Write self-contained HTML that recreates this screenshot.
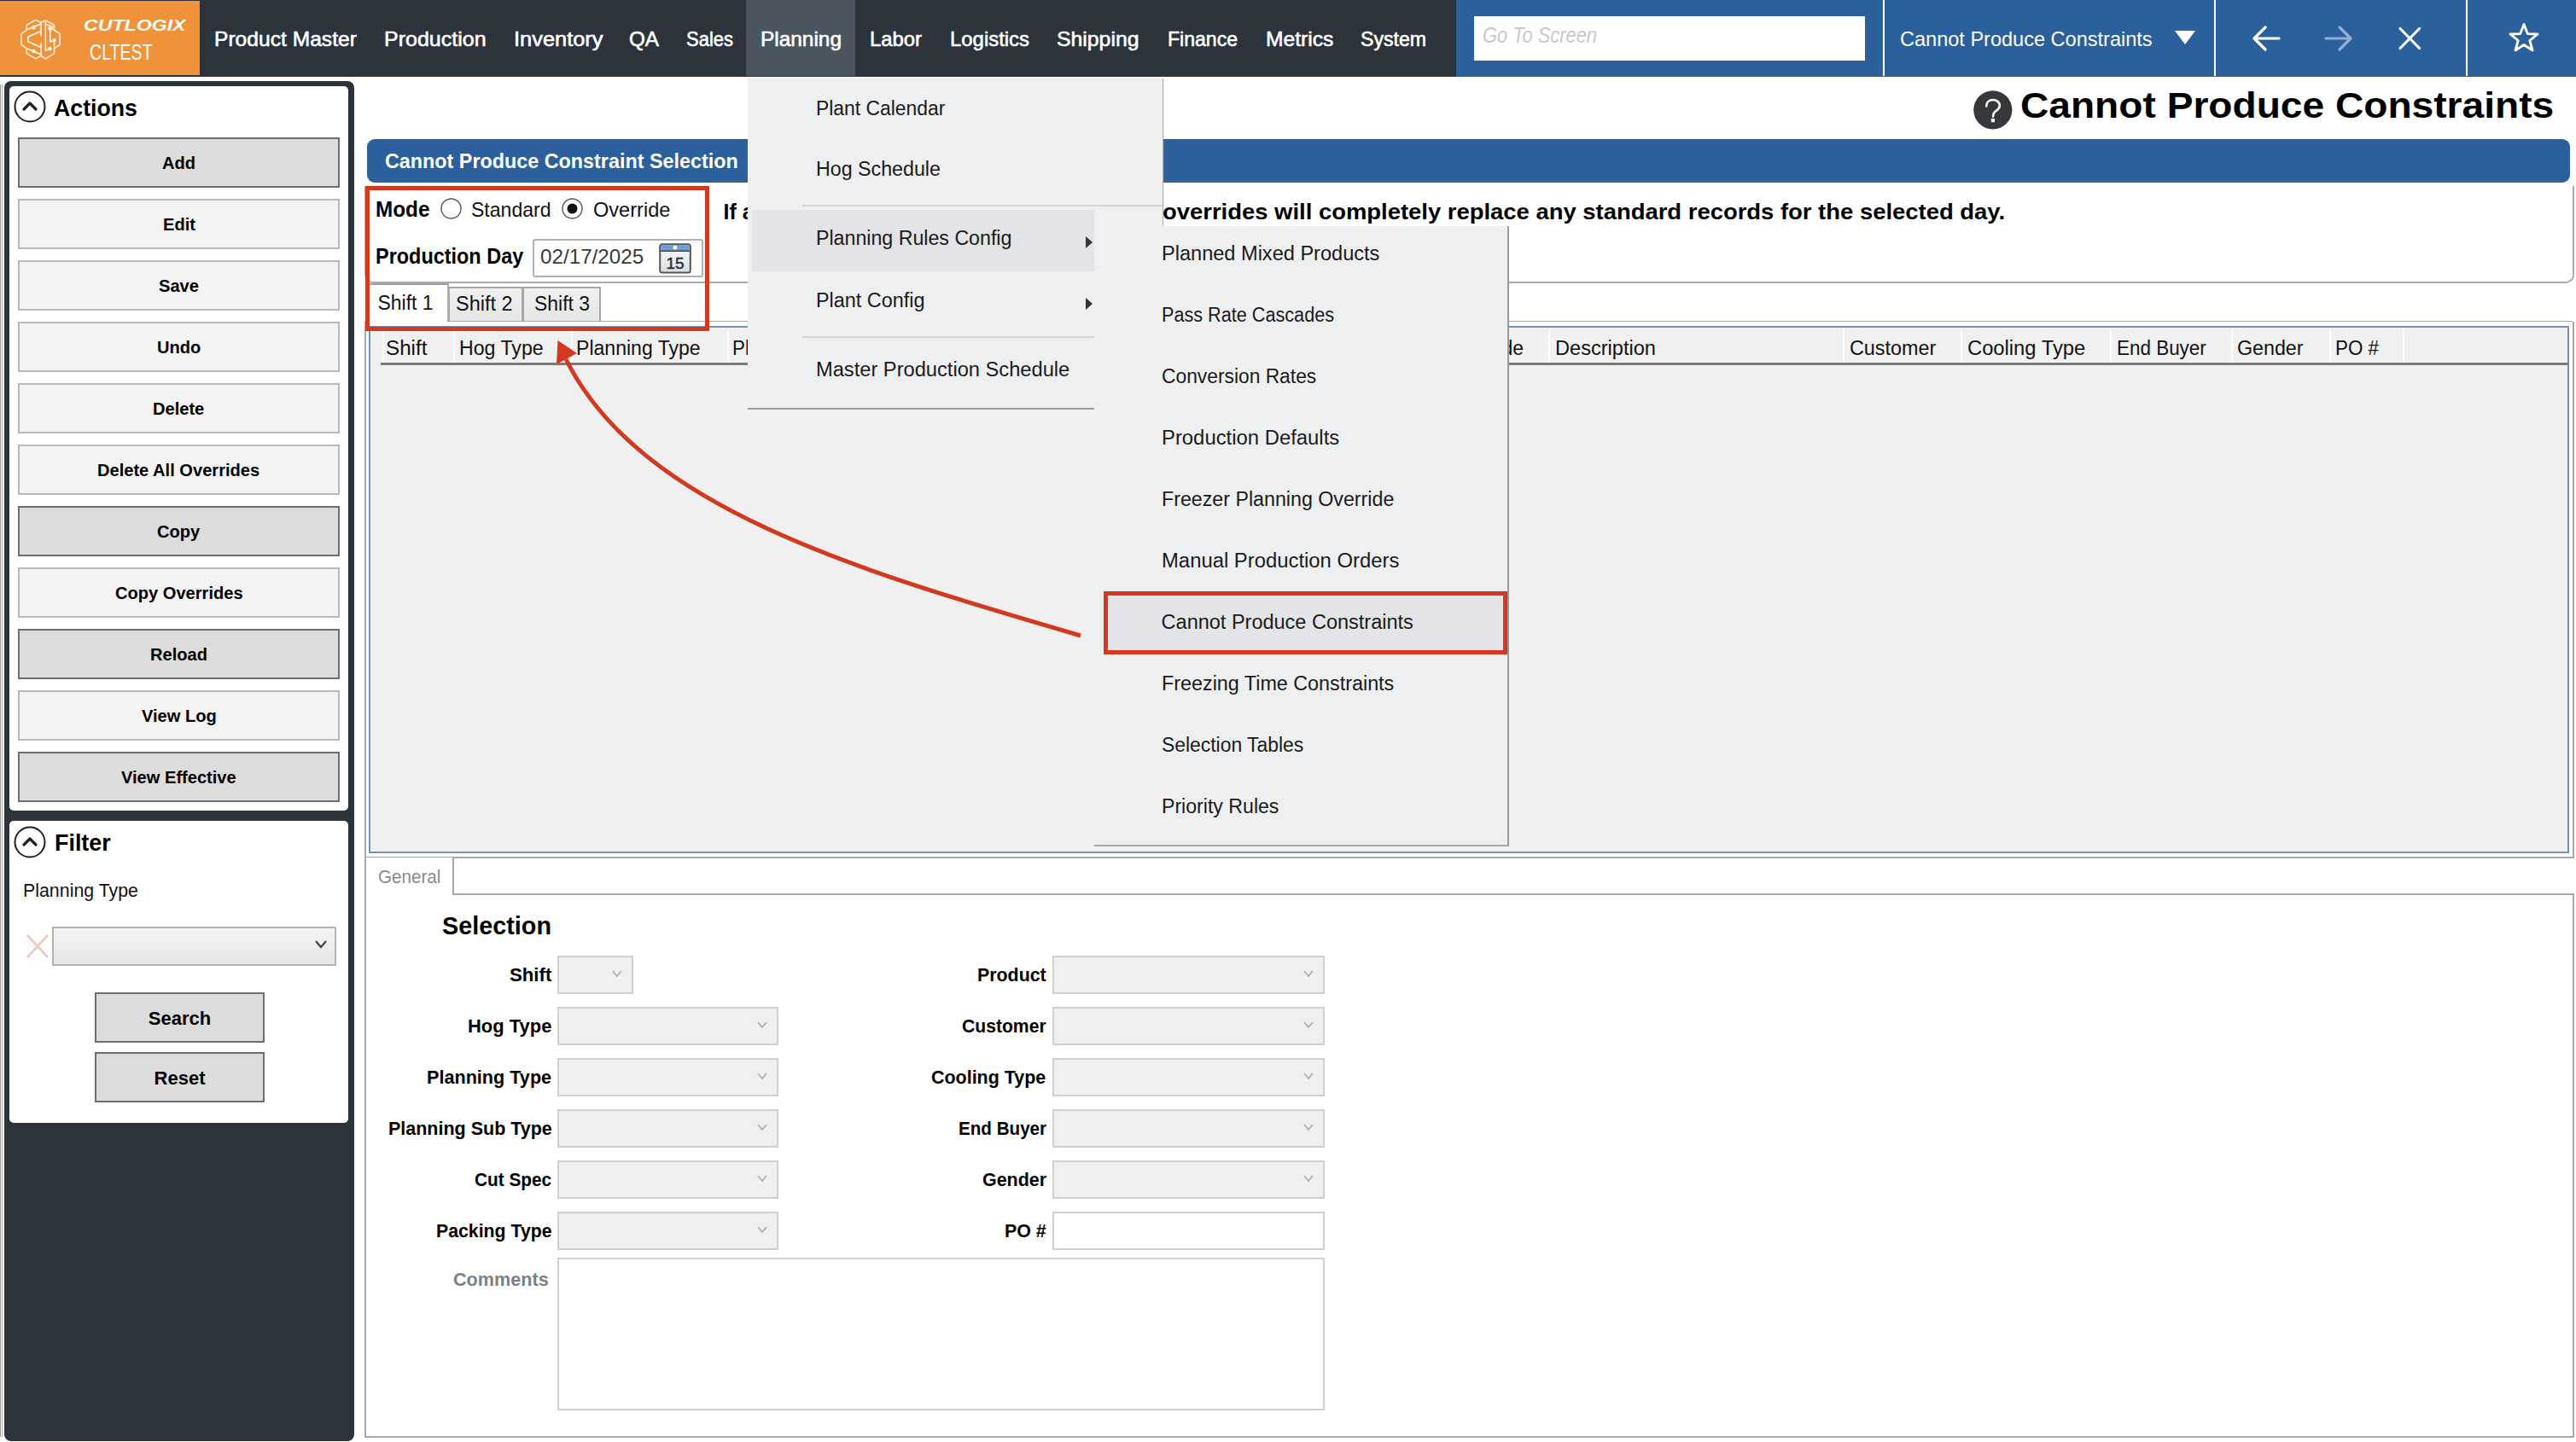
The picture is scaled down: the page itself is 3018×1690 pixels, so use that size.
<!DOCTYPE html>
<html><head><meta charset="utf-8"><style>
html,body{margin:0;padding:0;width:3018px;height:1690px;overflow:hidden;font-family:"Liberation Sans",sans-serif;}
</style></head><body>
<div style="position:absolute;left:0px;top:0px;width:3018px;height:1690px;background:#fff"></div>
<div style="position:absolute;left:0px;top:0px;width:3018px;height:90px;background:#2d333a"></div>
<div style="position:absolute;left:0px;top:1px;width:234px;height:87px;background:#f0923a"></div>
<div style="position:absolute;left:874px;top:0px;width:128px;height:89px;background:#4a555f"></div>
<div style="position:absolute;left:1706px;top:0px;width:1312px;height:89.5px;background:#2c609c"></div>
<div style="position:absolute;left:1727px;top:19px;width:458px;height:52px;background:#fff"></div>
<div style="position:absolute;left:2206px;top:0px;width:2px;height:89px;background:#fff"></div>
<div style="position:absolute;left:2594px;top:0px;width:2px;height:89px;background:#fff"></div>
<div style="position:absolute;left:2889px;top:0px;width:2px;height:89px;background:#fff"></div>
<svg style="position:absolute;left:20px;top:18px" width="56" height="56" viewBox="0 0 56 56" fill="none" stroke="#fff7ee" stroke-width="1.5" stroke-linejoin="round" stroke-linecap="round">
<path d="M28 8.5 L21.7 5.4 L11.3 11.3 L11.3 17.1 L5 21.7 L5 34.2 L11.3 38.8 L11.3 44.7 L21.7 50.9 L28 47.4 L33.4 50.9 L43.5 44.7 L43.5 38.8 L50.1 34.6 L50.1 21.7 L43.5 17.1 L43.5 11.3 L33.4 5.8 Z"/>
<path d="M28 8.5 L28 23.5 M28 33 L28 47.4"/>
<path d="M11.5 16.8 L27.2 10.2"/>
<path d="M27.2 19 L12.8 25.2 L12.8 30.7 L27.2 37.3"/>
<path d="M11.5 38.8 L27.2 45.5"/>
<path d="M33.4 5.8 L33.4 41.6 L38.6 39"/>
<path d="M35 10.8 L41.5 13.5 L41.5 17"/>
<path d="M38.8 15.5 L38.8 31 L43.5 29.3"/>
<path d="M43.5 29.3 L43.5 38.8"/>
<circle cx="19.4" cy="14.2" r="1.6" fill="#fff7ee"/><circle cx="19.4" cy="42" r="1.6" fill="#fff7ee"/>
<circle cx="38.6" cy="15.5" r="1.6" fill="#fff7ee"/><circle cx="43.5" cy="29.3" r="1.6" fill="#fff7ee"/><circle cx="38.4" cy="39.2" r="1.6" fill="#fff7ee"/>
</svg>
<div style="position:absolute;left:98.30px;top:20.21px;font-size:19px;line-height:19px;white-space:nowrap;color:#fff;font-weight:bold;font-style:italic;transform:scaleX(1.2176);transform-origin:0 0;">CUTLOGIX</div>
<div style="position:absolute;left:104.80px;top:48.71px;font-size:25.5px;line-height:25.5px;white-space:nowrap;color:#fff;transform:scaleX(0.7676);transform-origin:0 0;">CLTEST</div>
<div style="position:absolute;left:250.90px;top:33.63px;font-size:24.3px;line-height:24.3px;white-space:nowrap;color:#fff;-webkit-text-stroke:0.6px #fff;transform:scaleX(1.0130);transform-origin:0 0;">Product Master</div>
<div style="position:absolute;left:450.00px;top:33.63px;font-size:24.3px;line-height:24.3px;white-space:nowrap;color:#fff;-webkit-text-stroke:0.6px #fff;transform:scaleX(1.0297);transform-origin:0 0;">Production</div>
<div style="position:absolute;left:601.50px;top:33.63px;font-size:24.3px;line-height:24.3px;white-space:nowrap;color:#fff;-webkit-text-stroke:0.6px #fff;transform:scaleX(1.0457);transform-origin:0 0;">Inventory</div>
<div style="position:absolute;left:737.00px;top:33.63px;font-size:24.3px;line-height:24.3px;white-space:nowrap;color:#fff;-webkit-text-stroke:0.6px #fff;transform:scaleX(0.9968);transform-origin:0 0;">QA</div>
<div style="position:absolute;left:804.00px;top:33.63px;font-size:24.3px;line-height:24.3px;white-space:nowrap;color:#fff;-webkit-text-stroke:0.6px #fff;transform:scaleX(0.9044);transform-origin:0 0;">Sales</div>
<div style="position:absolute;left:891.00px;top:33.63px;font-size:24.3px;line-height:24.3px;white-space:nowrap;color:#fff;-webkit-text-stroke:0.6px #fff;transform:scaleX(1.0044);transform-origin:0 0;">Planning</div>
<div style="position:absolute;left:1019.00px;top:33.63px;font-size:24.3px;line-height:24.3px;white-space:nowrap;color:#fff;-webkit-text-stroke:0.6px #fff;transform:scaleX(0.9815);transform-origin:0 0;">Labor</div>
<div style="position:absolute;left:1113.00px;top:33.63px;font-size:24.3px;line-height:24.3px;white-space:nowrap;color:#fff;-webkit-text-stroke:0.6px #fff;transform:scaleX(0.9838);transform-origin:0 0;">Logistics</div>
<div style="position:absolute;left:1238.00px;top:33.63px;font-size:24.3px;line-height:24.3px;white-space:nowrap;color:#fff;-webkit-text-stroke:0.6px #fff;transform:scaleX(1.0202);transform-origin:0 0;">Shipping</div>
<div style="position:absolute;left:1368.00px;top:33.63px;font-size:24.3px;line-height:24.3px;white-space:nowrap;color:#fff;-webkit-text-stroke:0.6px #fff;transform:scaleX(0.9486);transform-origin:0 0;">Finance</div>
<div style="position:absolute;left:1482.60px;top:33.63px;font-size:24.3px;line-height:24.3px;white-space:nowrap;color:#fff;-webkit-text-stroke:0.6px #fff;transform:scaleX(1.0140);transform-origin:0 0;">Metrics</div>
<div style="position:absolute;left:1594.00px;top:33.63px;font-size:24.3px;line-height:24.3px;white-space:nowrap;color:#fff;-webkit-text-stroke:0.6px #fff;transform:scaleX(0.9501);transform-origin:0 0;">System</div>
<div style="position:absolute;left:1737.00px;top:28.83px;font-size:25px;line-height:25px;white-space:nowrap;color:#c9c9c9;font-style:italic;transform:scaleX(0.8740);transform-origin:0 0;">Go To Screen</div>
<div style="position:absolute;left:2226.00px;top:33.68px;font-size:24px;line-height:24px;white-space:nowrap;color:#fff;transform:scaleX(0.9804);transform-origin:0 0;">Cannot Produce Constraints</div>
<svg style="position:absolute;left:2547px;top:35px" width="26" height="18"><path d="M1 1 L25 1 L13 17 Z" fill="#fff"/></svg>
<svg style="position:absolute;left:2636px;top:26px" width="40" height="38" fill="none" stroke="#fff" stroke-width="3.2" stroke-linecap="round" stroke-linejoin="round"><path d="M34 19 L6 19 M18 6 L5 19 L18 32"/></svg>
<svg style="position:absolute;left:2721px;top:26px" width="40" height="38" fill="none" stroke="#8fb0d2" stroke-width="3.2" stroke-linecap="round" stroke-linejoin="round"><path d="M4 19 L32 19 M20 6 L33 19 L20 32"/></svg>
<svg style="position:absolute;left:2806px;top:28px" width="34" height="34" fill="none" stroke="#fff" stroke-width="3.2" stroke-linecap="round"><path d="M6 5.5 L28.5 28.5 M28.5 5.5 L6 28.5"/></svg>
<svg style="position:absolute;left:2936px;top:24px" width="42" height="40" fill="none" stroke="#fff" stroke-width="2.8" stroke-linejoin="round"><path d="M21 4.5 L25.3 15.6 L37 16 L27.8 23.5 L31 35 L21 28.5 L11 35 L14.2 23.5 L5 16 L16.7 15.6 Z"/></svg>
<div style="position:absolute;left:0px;top:99px;width:1px;height:1585px;background:#9a9a9a"></div>
<div style="position:absolute;left:2px;top:99px;width:1px;height:1585px;background:#b0b0b0"></div>
<div style="position:absolute;left:5px;top:95px;width:410px;height:1594px;background:#2d333a;border-radius:8px"></div>
<div style="position:absolute;left:10.5px;top:100.5px;width:397.5px;height:849.5px;background:#fff;border-radius:5px"></div>
<div style="position:absolute;left:10.5px;top:962px;width:397.5px;height:354px;background:#fff;border-radius:5px"></div>
<svg style="position:absolute;left:15px;top:105px" width="40" height="40" fill="none" stroke="#222" stroke-width="2"><circle cx="20" cy="20" r="17.5"/><path d="M13 23 L20 16 L27 23" stroke-width="3.2" stroke-linecap="round" stroke-linejoin="round"/></svg>
<div style="position:absolute;left:63.00px;top:112.79px;font-size:28px;line-height:28px;white-space:nowrap;color:#000;font-weight:bold;transform:scaleX(0.9543);transform-origin:0 0;">Actions</div>
<div style="position:absolute;left:21px;top:161px;width:377px;height:59px;background:#dcdcdc;border:2px solid #6e6e6e;box-sizing:border-box"></div>
<div style="position:absolute;left:189.97px;top:182.49px;font-size:19.5px;line-height:19.5px;white-space:nowrap;color:#000;font-weight:bold;transform:scaleX(1.0300);transform-origin:0 0;">Add</div>
<div style="position:absolute;left:21px;top:233px;width:377px;height:59px;background:#f3f3f3;border:2px solid #b8b8b8;box-sizing:border-box"></div>
<div style="position:absolute;left:190.54px;top:254.49px;font-size:19.5px;line-height:19.5px;white-space:nowrap;color:#000;font-weight:bold;transform:scaleX(1.0300);transform-origin:0 0;">Edit</div>
<div style="position:absolute;left:21px;top:305px;width:377px;height:59px;background:#f3f3f3;border:2px solid #b8b8b8;box-sizing:border-box"></div>
<div style="position:absolute;left:186.05px;top:326.49px;font-size:19.5px;line-height:19.5px;white-space:nowrap;color:#000;font-weight:bold;transform:scaleX(1.0300);transform-origin:0 0;">Save</div>
<div style="position:absolute;left:21px;top:377px;width:377px;height:59px;background:#f3f3f3;border:2px solid #b8b8b8;box-sizing:border-box"></div>
<div style="position:absolute;left:183.84px;top:398.49px;font-size:19.5px;line-height:19.5px;white-space:nowrap;color:#000;font-weight:bold;transform:scaleX(1.0300);transform-origin:0 0;">Undo</div>
<div style="position:absolute;left:21px;top:449px;width:377px;height:59px;background:#f3f3f3;border:2px solid #b8b8b8;box-sizing:border-box"></div>
<div style="position:absolute;left:179.35px;top:470.49px;font-size:19.5px;line-height:19.5px;white-space:nowrap;color:#000;font-weight:bold;transform:scaleX(1.0300);transform-origin:0 0;">Delete</div>
<div style="position:absolute;left:21px;top:521px;width:377px;height:59px;background:#f3f3f3;border:2px solid #b8b8b8;box-sizing:border-box"></div>
<div style="position:absolute;left:114.42px;top:542.49px;font-size:19.5px;line-height:19.5px;white-space:nowrap;color:#000;font-weight:bold;transform:scaleX(1.0300);transform-origin:0 0;">Delete All Overrides</div>
<div style="position:absolute;left:21px;top:593px;width:377px;height:59px;background:#dcdcdc;border:2px solid #6e6e6e;box-sizing:border-box"></div>
<div style="position:absolute;left:184.39px;top:614.49px;font-size:19.5px;line-height:19.5px;white-space:nowrap;color:#000;font-weight:bold;transform:scaleX(1.0300);transform-origin:0 0;">Copy</div>
<div style="position:absolute;left:21px;top:665px;width:377px;height:59px;background:#f3f3f3;border:2px solid #b8b8b8;box-sizing:border-box"></div>
<div style="position:absolute;left:134.71px;top:686.49px;font-size:19.5px;line-height:19.5px;white-space:nowrap;color:#000;font-weight:bold;transform:scaleX(1.0300);transform-origin:0 0;">Copy Overrides</div>
<div style="position:absolute;left:21px;top:737px;width:377px;height:59px;background:#dcdcdc;border:2px solid #6e6e6e;box-sizing:border-box"></div>
<div style="position:absolute;left:176.01px;top:758.49px;font-size:19.5px;line-height:19.5px;white-space:nowrap;color:#000;font-weight:bold;transform:scaleX(1.0300);transform-origin:0 0;">Reload</div>
<div style="position:absolute;left:21px;top:809px;width:377px;height:59px;background:#f3f3f3;border:2px solid #b8b8b8;box-sizing:border-box"></div>
<div style="position:absolute;left:165.59px;top:830.49px;font-size:19.5px;line-height:19.5px;white-space:nowrap;color:#000;font-weight:bold;transform:scaleX(1.0300);transform-origin:0 0;">View Log</div>
<div style="position:absolute;left:21px;top:881px;width:377px;height:59px;background:#dcdcdc;border:2px solid #6e6e6e;box-sizing:border-box"></div>
<div style="position:absolute;left:142.14px;top:902.49px;font-size:19.5px;line-height:19.5px;white-space:nowrap;color:#000;font-weight:bold;transform:scaleX(1.0300);transform-origin:0 0;">View Effective</div>
<svg style="position:absolute;left:15px;top:967px" width="40" height="40" fill="none" stroke="#222" stroke-width="2"><circle cx="20" cy="20" r="17.5"/><path d="M13 23 L20 16 L27 23" stroke-width="3.2" stroke-linecap="round" stroke-linejoin="round"/></svg>
<div style="position:absolute;left:64.00px;top:974.29px;font-size:28px;line-height:28px;white-space:nowrap;color:#000;font-weight:bold;transform:scaleX(0.9597);transform-origin:0 0;">Filter</div>
<div style="position:absolute;left:27.00px;top:1033.37px;font-size:22px;line-height:22px;white-space:nowrap;color:#111;transform:scaleX(0.9709);transform-origin:0 0;">Planning Type</div>
<svg style="position:absolute;left:29px;top:1093px" width="30" height="32" fill="none" stroke="#f4c6c0" stroke-width="2.6"><path d="M3 3 L27 29 M27 3 L3 29"/></svg>
<div style="position:absolute;left:61px;top:1086px;width:333px;height:46px;background:linear-gradient(#f4f4f4,#e6e6e6);border:2px solid #b4b4b4;box-sizing:border-box"></div>
<svg style="position:absolute;left:368px;top:1100px" width="16" height="14" fill="none" stroke="#444" stroke-width="2.2"><path d="M2 3 L8 10 L14 3"/></svg>
<div style="position:absolute;left:111px;top:1162.5px;width:199px;height:59px;background:#dcdcdc;border:2px solid #6e6e6e;box-sizing:border-box"></div>
<div style="position:absolute;left:173.81px;top:1183.37px;font-size:22px;line-height:22px;white-space:nowrap;color:#000;font-weight:bold;">Search</div>
<div style="position:absolute;left:111px;top:1232.5px;width:199px;height:59px;background:#dcdcdc;border:2px solid #6e6e6e;box-sizing:border-box"></div>
<div style="position:absolute;left:180.55px;top:1253.37px;font-size:22px;line-height:22px;white-space:nowrap;color:#000;font-weight:bold;">Reset</div>
<svg style="position:absolute;left:2312px;top:105.5px" width="46" height="46"><circle cx="22.8" cy="22.8" r="22.6" fill="#35383d"/><path d="M15.2 18.5 C15.2 13.5 18.8 11 23 11 C27.5 11 30.8 14 30.8 17.8 C30.8 21.8 27.3 23.3 25 25.3 C23.6 26.6 23 27.8 23 30.6" fill="none" stroke="#fff" stroke-width="2.6" stroke-linecap="round"/><rect x="20.8" y="33" width="4.2" height="4.2" fill="#fff"/></svg>
<div style="position:absolute;left:2366.70px;top:103.04px;font-size:42px;line-height:42px;white-space:nowrap;color:#000;font-weight:bold;transform:scaleX(1.0980);transform-origin:0 0;">Cannot Produce Constraints</div>
<div style="position:absolute;left:426.5px;top:210px;width:2589px;height:122.3px;border:2px solid #ababab;border-top:none;border-radius:0 0 10px 10px;box-sizing:border-box;background:#fff"></div>
<div style="position:absolute;left:420px;top:200px;width:2598px;height:18px;background:#fff"></div>
<div style="position:absolute;left:430.3px;top:162.5px;width:2581.2px;height:51.8px;background:#2c609c;border-radius:9px"></div>
<div style="position:absolute;left:450.70px;top:177.38px;font-size:24px;line-height:24px;white-space:nowrap;color:#fff;font-weight:bold;transform:scaleX(0.9725);transform-origin:0 0;">Cannot Produce Constraint Selection</div>
<div style="position:absolute;left:439.60px;top:233.33px;font-size:25px;line-height:25px;white-space:nowrap;color:#000;font-weight:bold;transform:scaleX(0.9716);transform-origin:0 0;">Mode</div>
<svg style="position:absolute;left:515px;top:231px" width="27" height="27"><circle cx="13.5" cy="13.5" r="11.5" fill="#fff" stroke="#555" stroke-width="1.4"/></svg>
<div style="position:absolute;left:552.00px;top:234.18px;font-size:24px;line-height:24px;white-space:nowrap;color:#111;transform:scaleX(0.9602);transform-origin:0 0;">Standard</div>
<svg style="position:absolute;left:657px;top:231px" width="27" height="27"><circle cx="13.5" cy="13.5" r="11.5" fill="#fff" stroke="#555" stroke-width="1.4"/><circle cx="13.5" cy="13.5" r="6" fill="#111"/></svg>
<div style="position:absolute;left:694.80px;top:234.18px;font-size:24px;line-height:24px;white-space:nowrap;color:#111;transform:scaleX(0.9822);transform-origin:0 0;">Override</div>
<div style="position:absolute;left:847.60px;top:236.13px;font-size:25px;line-height:25px;white-space:nowrap;color:#000;font-weight:bold;">If any</div>
<div style="position:absolute;left:1361.70px;top:236.03px;font-size:25px;line-height:25px;white-space:nowrap;color:#000;font-weight:bold;transform:scaleX(1.0969);transform-origin:0 0;">overrides will completely replace any standard records for the selected day.</div>
<div style="position:absolute;left:439.60px;top:288.33px;font-size:25px;line-height:25px;white-space:nowrap;color:#000;font-weight:bold;transform:scaleX(0.9375);transform-origin:0 0;">Production Day</div>
<div style="position:absolute;left:624px;top:280px;width:200px;height:45px;border:2.5px solid #a9b3bd;border-radius:3px;box-sizing:border-box;background:#fff"></div>
<div style="position:absolute;left:633.30px;top:288.68px;font-size:24px;line-height:24px;white-space:nowrap;color:#3a3a3a;transform:scaleX(1.0090);transform-origin:0 0;">02/17/2025</div>
<svg style="position:absolute;left:772px;top:284.5px" width="38" height="36">
<defs><linearGradient id="cg" x1="0" y1="0" x2="0" y2="1"><stop offset="0" stop-color="#fbfcfd"/><stop offset="1" stop-color="#d9dde2"/></linearGradient></defs>
<rect x="1.2" y="1.2" width="35.6" height="33.4" rx="2.5" fill="url(#cg)" stroke="#555" stroke-width="2"/>
<rect x="2.2" y="2.2" width="33.6" height="6.8" fill="#6f9fd6"/>
<line x1="2.2" y1="9.3" x2="35.8" y2="9.3" stroke="#444" stroke-width="1.6"/>
<circle cx="19" cy="5.2" r="2.4" fill="#fff"/>
<text x="19" y="30" font-family="Liberation Sans" font-size="19" fill="#2a2a2a" text-anchor="middle" stroke="#2a2a2a" stroke-width="0.4">15</text>
</svg>
<div style="position:absolute;left:430px;top:332px;width:96px;height:46px;background:#fff;border-left:2px solid #c8c8c8;border-top:2px solid #a0a0a0;border-right:2px solid #b0b0b0;box-sizing:border-box"></div>
<div style="position:absolute;left:525px;top:336px;width:88px;height:41px;background:linear-gradient(#f0f0f0,#e6e6e6);border:2px solid #a8a8a8;border-bottom:none;box-sizing:border-box"></div>
<div style="position:absolute;left:612px;top:336px;width:92px;height:41px;background:linear-gradient(#f0f0f0,#e6e6e6);border:2px solid #a8a8a8;border-bottom:none;box-sizing:border-box"></div>
<div style="position:absolute;left:525px;top:376px;width:2489px;height:2px;background:#a8a8a8"></div>
<div style="position:absolute;left:442.40px;top:344.03px;font-size:23px;line-height:23px;white-space:nowrap;color:#111;">Shift 1</div>
<div style="position:absolute;left:533.70px;top:344.53px;font-size:23px;line-height:23px;white-space:nowrap;color:#111;transform:scaleX(1.0229);transform-origin:0 0;">Shift 2</div>
<div style="position:absolute;left:625.50px;top:344.53px;font-size:23px;line-height:23px;white-space:nowrap;color:#111;transform:scaleX(0.9969);transform-origin:0 0;">Shift 3</div>
<div style="position:absolute;left:427px;top:377px;width:2589px;height:629px;border:2px solid #a8a8a8;border-top:none;box-sizing:border-box;background:#fff"></div>
<div style="position:absolute;left:432px;top:382px;width:2578px;height:618px;border:2px solid #7191b6;box-sizing:border-box;background:#f0f0f0"></div>
<div style="position:absolute;left:446px;top:425px;width:2562px;height:3px;background:#7a7a7a"></div>
<div style="position:absolute;left:448px;top:386px;width:2px;height:39px;background:#fcfcfc"></div>
<div style="position:absolute;left:531px;top:386px;width:2px;height:39px;background:#fcfcfc"></div>
<div style="position:absolute;left:669px;top:386px;width:2px;height:39px;background:#fcfcfc"></div>
<div style="position:absolute;left:852px;top:386px;width:2px;height:39px;background:#fcfcfc"></div>
<div style="position:absolute;left:1814px;top:386px;width:2px;height:39px;background:#fcfcfc"></div>
<div style="position:absolute;left:2159px;top:386px;width:2px;height:39px;background:#fcfcfc"></div>
<div style="position:absolute;left:2297px;top:386px;width:2px;height:39px;background:#fcfcfc"></div>
<div style="position:absolute;left:2472px;top:386px;width:2px;height:39px;background:#fcfcfc"></div>
<div style="position:absolute;left:2614px;top:386px;width:2px;height:39px;background:#fcfcfc"></div>
<div style="position:absolute;left:2729px;top:386px;width:2px;height:39px;background:#fcfcfc"></div>
<div style="position:absolute;left:2815px;top:386px;width:2px;height:39px;background:#fcfcfc"></div>
<div style="position:absolute;left:452.20px;top:396.53px;font-size:23px;line-height:23px;white-space:nowrap;color:#111;transform:scaleX(1.0522);transform-origin:0 0;">Shift</div>
<div style="position:absolute;left:537.80px;top:396.53px;font-size:23px;line-height:23px;white-space:nowrap;color:#111;transform:scaleX(1.0068);transform-origin:0 0;">Hog Type</div>
<div style="position:absolute;left:674.90px;top:396.53px;font-size:23px;line-height:23px;white-space:nowrap;color:#111;transform:scaleX(1.0023);transform-origin:0 0;">Planning Type</div>
<div style="position:absolute;left:857.90px;top:396.53px;font-size:23px;line-height:23px;white-space:nowrap;color:#111;transform:scaleX(0.97);transform-origin:0 0;">Plant</div>
<div style="position:absolute;left:1730.03px;top:396.53px;font-size:23px;line-height:23px;white-space:nowrap;color:#111;">Code</div>
<div style="position:absolute;left:1821.60px;top:396.53px;font-size:23px;line-height:23px;white-space:nowrap;color:#111;transform:scaleX(1.0256);transform-origin:0 0;">Description</div>
<div style="position:absolute;left:2167.40px;top:396.53px;font-size:23px;line-height:23px;white-space:nowrap;color:#111;transform:scaleX(1.0150);transform-origin:0 0;">Customer</div>
<div style="position:absolute;left:2304.50px;top:396.53px;font-size:23px;line-height:23px;white-space:nowrap;color:#111;transform:scaleX(1.0324);transform-origin:0 0;">Cooling Type</div>
<div style="position:absolute;left:2480.40px;top:396.53px;font-size:23px;line-height:23px;white-space:nowrap;color:#111;transform:scaleX(0.9757);transform-origin:0 0;">End Buyer</div>
<div style="position:absolute;left:2621.20px;top:396.53px;font-size:23px;line-height:23px;white-space:nowrap;color:#111;transform:scaleX(1.0104);transform-origin:0 0;">Gender</div>
<div style="position:absolute;left:2735.90px;top:396.53px;font-size:23px;line-height:23px;white-space:nowrap;color:#111;transform:scaleX(0.9706);transform-origin:0 0;">PO #</div>
<div style="position:absolute;left:427px;top:1048px;width:2589px;height:637px;border:2px solid #a8a8a8;border-top:none;box-sizing:border-box;background:#fff"></div>
<div style="position:absolute;left:531px;top:1047px;width:2485px;height:2px;background:#a8a8a8"></div>
<div style="position:absolute;left:427px;top:1005px;width:105px;height:44px;border-left:2px solid #a8a8a8;border-right:2px solid #a8a8a8;box-sizing:border-box;background:#fff"></div>
<div style="position:absolute;left:443.00px;top:1016.87px;font-size:22px;line-height:22px;white-space:nowrap;color:#8a8a8a;transform:scaleX(0.9378);transform-origin:0 0;">General</div>
<div style="position:absolute;left:518.00px;top:1069.90px;font-size:30px;line-height:30px;white-space:nowrap;color:#000;font-weight:bold;transform:scaleX(0.9599);transform-origin:0 0;">Selection</div>
<div style="position:absolute;left:597.10px;top:1132.45px;font-size:22.5px;line-height:22.5px;white-space:nowrap;color:#000;font-weight:bold;transform:scaleX(0.9859);transform-origin:0 0;">Shift</div>
<div style="position:absolute;left:1144.90px;top:1132.45px;font-size:22.5px;line-height:22.5px;white-space:nowrap;color:#000;font-weight:bold;transform:scaleX(0.9495);transform-origin:0 0;">Product</div>
<div style="position:absolute;left:652.7px;top:1120px;width:89px;height:45px;background:#efefef;border:2px solid #d0d0d0;box-sizing:border-box"></div>
<svg style="position:absolute;left:715.7px;top:1136px" width="14" height="12" fill="none" stroke="#aaa" stroke-width="1.6"><path d="M2 2 L7 8 L12 2"/></svg>
<div style="position:absolute;left:1233px;top:1120px;width:319px;height:45px;background:#efefef;border:2px solid #d0d0d0;box-sizing:border-box"></div>
<svg style="position:absolute;left:1526px;top:1136px" width="14" height="12" fill="none" stroke="#aaa" stroke-width="1.6"><path d="M2 2 L7 8 L12 2"/></svg>
<div style="position:absolute;left:547.90px;top:1192.45px;font-size:22.5px;line-height:22.5px;white-space:nowrap;color:#000;font-weight:bold;transform:scaleX(0.9766);transform-origin:0 0;">Hog Type</div>
<div style="position:absolute;left:1127.00px;top:1192.45px;font-size:22.5px;line-height:22.5px;white-space:nowrap;color:#000;font-weight:bold;transform:scaleX(0.9389);transform-origin:0 0;">Customer</div>
<div style="position:absolute;left:652.7px;top:1180px;width:259px;height:45px;background:#efefef;border:2px solid #d0d0d0;box-sizing:border-box"></div>
<svg style="position:absolute;left:885.7px;top:1196px" width="14" height="12" fill="none" stroke="#aaa" stroke-width="1.6"><path d="M2 2 L7 8 L12 2"/></svg>
<div style="position:absolute;left:1233px;top:1180px;width:319px;height:45px;background:#efefef;border:2px solid #d0d0d0;box-sizing:border-box"></div>
<svg style="position:absolute;left:1526px;top:1196px" width="14" height="12" fill="none" stroke="#aaa" stroke-width="1.6"><path d="M2 2 L7 8 L12 2"/></svg>
<div style="position:absolute;left:500.30px;top:1252.45px;font-size:22.5px;line-height:22.5px;white-space:nowrap;color:#000;font-weight:bold;transform:scaleX(0.9606);transform-origin:0 0;">Planning Type</div>
<div style="position:absolute;left:1091.40px;top:1252.45px;font-size:22.5px;line-height:22.5px;white-space:nowrap;color:#000;font-weight:bold;transform:scaleX(0.9528);transform-origin:0 0;">Cooling Type</div>
<div style="position:absolute;left:652.7px;top:1240px;width:259px;height:45px;background:#efefef;border:2px solid #d0d0d0;box-sizing:border-box"></div>
<svg style="position:absolute;left:885.7px;top:1256px" width="14" height="12" fill="none" stroke="#aaa" stroke-width="1.6"><path d="M2 2 L7 8 L12 2"/></svg>
<div style="position:absolute;left:1233px;top:1240px;width:319px;height:45px;background:#efefef;border:2px solid #d0d0d0;box-sizing:border-box"></div>
<svg style="position:absolute;left:1526px;top:1256px" width="14" height="12" fill="none" stroke="#aaa" stroke-width="1.6"><path d="M2 2 L7 8 L12 2"/></svg>
<div style="position:absolute;left:454.60px;top:1312.45px;font-size:22.5px;line-height:22.5px;white-space:nowrap;color:#000;font-weight:bold;transform:scaleX(0.9549);transform-origin:0 0;">Planning Sub Type</div>
<div style="position:absolute;left:1122.50px;top:1312.45px;font-size:22.5px;line-height:22.5px;white-space:nowrap;color:#000;font-weight:bold;transform:scaleX(0.9164);transform-origin:0 0;">End Buyer</div>
<div style="position:absolute;left:652.7px;top:1300px;width:259px;height:45px;background:#efefef;border:2px solid #d0d0d0;box-sizing:border-box"></div>
<svg style="position:absolute;left:885.7px;top:1316px" width="14" height="12" fill="none" stroke="#aaa" stroke-width="1.6"><path d="M2 2 L7 8 L12 2"/></svg>
<div style="position:absolute;left:1233px;top:1300px;width:319px;height:45px;background:#efefef;border:2px solid #d0d0d0;box-sizing:border-box"></div>
<svg style="position:absolute;left:1526px;top:1316px" width="14" height="12" fill="none" stroke="#aaa" stroke-width="1.6"><path d="M2 2 L7 8 L12 2"/></svg>
<div style="position:absolute;left:556.30px;top:1372.45px;font-size:22.5px;line-height:22.5px;white-space:nowrap;color:#000;font-weight:bold;transform:scaleX(0.9237);transform-origin:0 0;">Cut Spec</div>
<div style="position:absolute;left:1150.60px;top:1372.45px;font-size:22.5px;line-height:22.5px;white-space:nowrap;color:#000;font-weight:bold;transform:scaleX(0.9524);transform-origin:0 0;">Gender</div>
<div style="position:absolute;left:652.7px;top:1360px;width:259px;height:45px;background:#efefef;border:2px solid #d0d0d0;box-sizing:border-box"></div>
<svg style="position:absolute;left:885.7px;top:1376px" width="14" height="12" fill="none" stroke="#aaa" stroke-width="1.6"><path d="M2 2 L7 8 L12 2"/></svg>
<div style="position:absolute;left:1233px;top:1360px;width:319px;height:45px;background:#efefef;border:2px solid #d0d0d0;box-sizing:border-box"></div>
<svg style="position:absolute;left:1526px;top:1376px" width="14" height="12" fill="none" stroke="#aaa" stroke-width="1.6"><path d="M2 2 L7 8 L12 2"/></svg>
<div style="position:absolute;left:510.80px;top:1432.45px;font-size:22.5px;line-height:22.5px;white-space:nowrap;color:#000;font-weight:bold;transform:scaleX(0.9457);transform-origin:0 0;">Packing Type</div>
<div style="position:absolute;left:1176.80px;top:1432.45px;font-size:22.5px;line-height:22.5px;white-space:nowrap;color:#000;font-weight:bold;transform:scaleX(0.9513);transform-origin:0 0;">PO #</div>
<div style="position:absolute;left:652.7px;top:1420px;width:259px;height:45px;background:#efefef;border:2px solid #d0d0d0;box-sizing:border-box"></div>
<svg style="position:absolute;left:885.7px;top:1436px" width="14" height="12" fill="none" stroke="#aaa" stroke-width="1.6"><path d="M2 2 L7 8 L12 2"/></svg>
<div style="position:absolute;left:1233px;top:1420px;width:319px;height:45px;background:#fff;border:2px solid #d0d0d0;box-sizing:border-box"></div>
<div style="position:absolute;left:531.30px;top:1488.97px;font-size:22px;line-height:22px;white-space:nowrap;color:#808080;font-weight:bold;transform:scaleX(0.9825);transform-origin:0 0;">Comments</div>
<div style="position:absolute;left:652.7px;top:1474px;width:899px;height:179px;background:#fff;border:2px solid #d0d0d0;box-sizing:border-box"></div>
<div style="position:absolute;left:876px;top:92px;width:486px;height:173px;background:#eeeff1;box-shadow:1px 0 1px #b0b0b0"></div>
<div style="position:absolute;left:876px;top:265px;width:406px;height:215px;background:#eeeff1"></div>
<div style="position:absolute;left:876px;top:478px;width:406px;height:2px;background:#9c9c9c"></div>
<div style="position:absolute;left:940px;top:240px;width:422px;height:2px;background:#d4d4d6"></div>
<div style="position:absolute;left:940px;top:394px;width:342px;height:2px;background:#d4d4d6"></div>
<div style="position:absolute;left:881px;top:246px;width:401px;height:72px;background:#e3e4e7"></div>
<div style="position:absolute;left:955.60px;top:115.50px;font-size:23.5px;line-height:23.5px;white-space:nowrap;color:#1a1a1a;transform:scaleX(0.9739);transform-origin:0 0;">Plant Calendar</div>
<div style="position:absolute;left:955.60px;top:187.40px;font-size:23.5px;line-height:23.5px;white-space:nowrap;color:#1a1a1a;transform:scaleX(0.9882);transform-origin:0 0;">Hog Schedule</div>
<div style="position:absolute;left:955.60px;top:268.00px;font-size:23.5px;line-height:23.5px;white-space:nowrap;color:#1a1a1a;transform:scaleX(0.9865);transform-origin:0 0;">Planning Rules Config</div>
<div style="position:absolute;left:955.60px;top:341.40px;font-size:23.5px;line-height:23.5px;white-space:nowrap;color:#1a1a1a;transform:scaleX(0.9952);transform-origin:0 0;">Plant Config</div>
<div style="position:absolute;left:955.60px;top:421.90px;font-size:23.5px;line-height:23.5px;white-space:nowrap;color:#1a1a1a;transform:scaleX(1.0067);transform-origin:0 0;">Master Production Schedule</div>
<svg style="position:absolute;left:1270px;top:276px" width="12" height="16"><path d="M2 1 L10 8 L2 15 Z" fill="#333"/></svg>
<svg style="position:absolute;left:1270px;top:348px" width="12" height="16"><path d="M2 1 L10 8 L2 15 Z" fill="#333"/></svg>
<div style="position:absolute;left:1282px;top:265px;width:486px;height:727px;background:#eeeff1;border-right:2px solid #9a9a9a;border-bottom:2px solid #a8a8a8;box-sizing:border-box"></div>
<div style="position:absolute;left:1295px;top:695px;width:470px;height:70px;background:#e3e4e7"></div>
<div style="position:absolute;left:1360.60px;top:286.30px;font-size:23.5px;line-height:23.5px;white-space:nowrap;color:#1a1a1a;transform:scaleX(1.0026);transform-origin:0 0;">Planned Mixed Products</div>
<div style="position:absolute;left:1360.60px;top:358.30px;font-size:23.5px;line-height:23.5px;white-space:nowrap;color:#1a1a1a;transform:scaleX(0.9206);transform-origin:0 0;">Pass Rate Cascades</div>
<div style="position:absolute;left:1360.60px;top:430.30px;font-size:23.5px;line-height:23.5px;white-space:nowrap;color:#1a1a1a;transform:scaleX(0.9702);transform-origin:0 0;">Conversion Rates</div>
<div style="position:absolute;left:1360.60px;top:502.30px;font-size:23.5px;line-height:23.5px;white-space:nowrap;color:#1a1a1a;transform:scaleX(1.0151);transform-origin:0 0;">Production Defaults</div>
<div style="position:absolute;left:1360.60px;top:574.30px;font-size:23.5px;line-height:23.5px;white-space:nowrap;color:#1a1a1a;transform:scaleX(0.9880);transform-origin:0 0;">Freezer Planning Override</div>
<div style="position:absolute;left:1360.60px;top:646.30px;font-size:23.5px;line-height:23.5px;white-space:nowrap;color:#1a1a1a;transform:scaleX(1.0149);transform-origin:0 0;">Manual Production Orders</div>
<div style="position:absolute;left:1360.60px;top:718.30px;font-size:23.5px;line-height:23.5px;white-space:nowrap;color:#1a1a1a;">Cannot Produce Constraints</div>
<div style="position:absolute;left:1360.60px;top:790.30px;font-size:23.5px;line-height:23.5px;white-space:nowrap;color:#1a1a1a;transform:scaleX(0.9927);transform-origin:0 0;">Freezing Time Constraints</div>
<div style="position:absolute;left:1360.60px;top:862.30px;font-size:23.5px;line-height:23.5px;white-space:nowrap;color:#1a1a1a;transform:scaleX(0.9741);transform-origin:0 0;">Selection Tables</div>
<div style="position:absolute;left:1360.60px;top:934.30px;font-size:23.5px;line-height:23.5px;white-space:nowrap;color:#1a1a1a;transform:scaleX(0.9835);transform-origin:0 0;">Priority Rules</div>
<div style="position:absolute;left:1293px;top:693px;width:473px;height:74px;border:5px solid #d2391f;box-sizing:border-box"></div>
<div style="position:absolute;left:428px;top:218px;width:403px;height:170px;border:5px solid #d2391f;box-sizing:border-box"></div>
<svg style="position:absolute;left:0;top:0" width="3018" height="1690">
<path d="M1266 745 C 1001.6 667.8 749.9 594.3 663 421" fill="none" stroke="#d2391f" stroke-width="5"/>
<path d="M653.5 399 L652 427 L676 414 Z" fill="#d2391f"/>
</svg>
</body></html>
